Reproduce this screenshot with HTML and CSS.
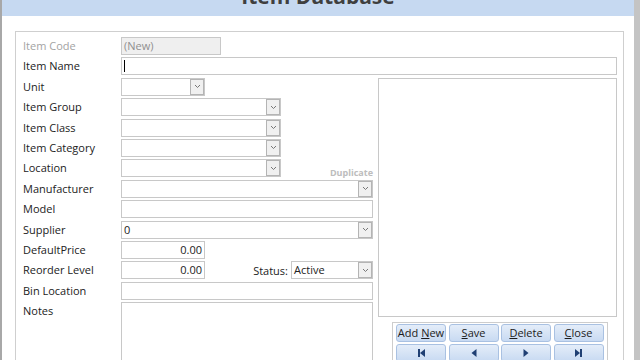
FILE: index.html
```html
<!DOCTYPE html>
<html lang="en">
<head>
  <meta charset="UTF-8">
  <title>Item Database</title>
  <meta name="viewport" content="width=device-width, initial-scale=1.0">
  <link rel="stylesheet" href="styles.css">
</head>
<body>

  <div class="window">
    <!-- TITLE -->
    <div class="titlebar">
      <h1>Item Database</h1>
    </div>

    <!-- FORM -->
    <div class="frame">
      <div class="form">
        <div class="label muted">Item Code</div>
        <div class="cell"><div class="box locked w-code">(New)</div></div>

        <div class="label">Item Name</div>
        <div class="cell wide"><div class="box w-full"><span class="caret"></span></div></div>

        <div class="label">Unit</div>
        <div class="cell"><div class="box combo w-short"><span class="val"></span><span class="arrow"><svg width="7" height="5" viewBox="0 0 7 5"><path d="M1 1l2.5 2.5L6 1" fill="none" stroke="#777" stroke-width="1"/></svg></span></div></div>

        <div class="label">Item Group</div>
        <div class="cell"><div class="box combo w-mid"><span class="val"></span><span class="arrow"><svg width="7" height="5" viewBox="0 0 7 5"><path d="M1 1l2.5 2.5L6 1" fill="none" stroke="#777" stroke-width="1"/></svg></span></div></div>

        <div class="label">Item Class</div>
        <div class="cell"><div class="box combo w-mid"><span class="val"></span><span class="arrow"><svg width="7" height="5" viewBox="0 0 7 5"><path d="M1 1l2.5 2.5L6 1" fill="none" stroke="#777" stroke-width="1"/></svg></span></div></div>

        <div class="label">Item Category</div>
        <div class="cell"><div class="box combo w-mid"><span class="val"></span><span class="arrow"><svg width="7" height="5" viewBox="0 0 7 5"><path d="M1 1l2.5 2.5L6 1" fill="none" stroke="#777" stroke-width="1"/></svg></span></div></div>

        <div class="label">Location</div>
        <div class="cell split">
          <div class="box combo w-mid"><span class="val"></span><span class="arrow"><svg width="7" height="5" viewBox="0 0 7 5"><path d="M1 1l2.5 2.5L6 1" fill="none" stroke="#777" stroke-width="1"/></svg></span></div>
          <span class="dup">Duplicate</span>
        </div>

        <div class="label">Manufacturer</div>
        <div class="cell"><div class="box combo w-long"><span class="val"></span><span class="arrow"><svg width="7" height="5" viewBox="0 0 7 5"><path d="M1 1l2.5 2.5L6 1" fill="none" stroke="#777" stroke-width="1"/></svg></span></div></div>

        <div class="label">Model</div>
        <div class="cell"><div class="box w-long"></div></div>

        <div class="label">Supplier</div>
        <div class="cell"><div class="box combo w-long"><span class="val">0</span><span class="arrow"><svg width="7" height="5" viewBox="0 0 7 5"><path d="M1 1l2.5 2.5L6 1" fill="none" stroke="#777" stroke-width="1"/></svg></span></div></div>

        <div class="label">DefaultPrice</div>
        <div class="cell"><div class="box num w-short">0.00</div></div>

        <div class="label">Reorder Level</div>
        <div class="cell split">
          <div class="box num w-short">0.00</div>
          <div class="status">
            <span>Status:</span>
            <div class="box combo w-status"><span class="val">Active</span><span class="arrow"><svg width="7" height="5" viewBox="0 0 7 5"><path d="M1 1l2.5 2.5L6 1" fill="none" stroke="#777" stroke-width="1"/></svg></span></div>
          </div>
        </div>

        <div class="label">Bin Location</div>
        <div class="cell"><div class="box w-long"></div></div>

        <div class="label">Notes</div>
        <div class="cell"><div class="box notes w-long"></div></div>

        <!-- picture + buttons -->
        <div class="side">
          <div class="picture"></div>
          <div class="panel">
            <button class="btn"><span>Add <u>N</u>ew</span></button>
            <button class="btn"><span><u>S</u>ave</span></button>
            <button class="btn"><span><u>D</u>elete</span></button>
            <button class="btn"><span><u>C</u>lose</span></button>
            <button class="btn"><svg width="9" height="8" viewBox="0 0 9 8"><rect x="1" y="0" width="2" height="8" fill="#1f3f73"/><path d="M8 0v8L3 4z" fill="#1f3f73"/></svg></button>
            <button class="btn"><svg width="6" height="8" viewBox="0 0 6 8"><path d="M5.5 0v8L0.5 4z" fill="#1f3f73"/></svg></button>
            <button class="btn"><svg width="6" height="8" viewBox="0 0 6 8"><path d="M0.5 0v8L5.5 4z" fill="#1f3f73"/></svg></button>
            <button class="btn"><svg width="9" height="8" viewBox="0 0 9 8"><path d="M1 0v8L6 4z" fill="#1f3f73"/><rect x="6" y="0" width="2" height="8" fill="#1f3f73"/></svg></button>
          </div>
        </div>
      </div>
    </div>
  </div>

</body>
</html>
```

FILE: styles.css
```css
body {
  margin: 0;
  font-family: "Open Sans", sans-serif;
  font-size: 11px;
  color: #222;
  background-color: #fff;
}

/* WINDOW */
.window {
  width: 640px;
  height: 360px;
  overflow: hidden;
  box-sizing: border-box;
  border-left: 2px solid #a8a8a8;
  border-right: 6px solid #c4c4c4;
}

.titlebar {
  height: 16px;
  background-color: #c6d9f1;
  overflow: hidden;
  text-align: center;
}

.titlebar h1 {
  margin: -16px 0 0;
  font-size: 21px;
  line-height: 24px;
  font-weight: bold;
  color: #3f3f3f;
}

/* FRAME */
.frame {
  margin: 15px 0 0 13px;
  width: 609px;
  height: 400px;
  box-sizing: border-box;
  border: 1px solid #cfcfcf;
  padding: 5px 0 0 7px;
}

.form {
  display: grid;
  grid-template-columns: 98px 257px 239px;
  grid-auto-rows: 18px;
  row-gap: 2.4px;
}

.label {
  grid-column: 1;
  line-height: 18px;
  white-space: nowrap;
}

.label.muted {
  color: #a3a3a3;
}

.cell {
  grid-column: 2;
  display: flex;
}

.cell.wide {
  grid-column: 2 / 4;
}

.cell.split {
  align-items: flex-end;
}

/* FIELDS */
.box {
  box-sizing: border-box;
  height: 18px;
  border: 1px solid #c8c8c8;
  background: #fff;
  line-height: 16px;
  padding: 0 2px;
  white-space: nowrap;
}

.box.locked {
  background: #efefef;
  color: #8f8f8f;
}

.box.num {
  text-align: right;
}

.box.notes {
  height: 80px;
}

.w-code { width: 100px; }
.w-full { width: 496px; }
.w-short { width: 84px; }
.w-mid { width: 160px; }
.w-long { width: 252px; }
.w-status { width: 82px; }

.caret {
  display: inline-block;
  width: 1px;
  height: 12px;
  margin-top: 2px;
  background: #000;
  vertical-align: top;
}

.combo {
  display: flex;
  padding-right: 0;
}

.combo .val {
  flex: 1;
}

.combo .arrow {
  width: 14px;
  height: 16px;
  box-sizing: border-box;
  border: 1px solid #b4b4b4;
  background: #f0f0f0;
  display: flex;
  align-items: center;
  justify-content: center;
}

.dup {
  margin-left: auto;
  margin-right: 5px;
  font-size: 9px;
  font-weight: bold;
  color: #bdbdbd;
  line-height: 12px;
  margin-bottom: -2px;
}

.status {
  margin-left: auto;
  margin-right: 5px;
  display: flex;
  align-items: center;
  gap: 3px;
}

/* PICTURE + BUTTONS */
.side {
  grid-column: 3;
  grid-row: 3 / span 12;
  display: flex;
  flex-direction: column;
  align-items: flex-start;
}

.picture {
  width: 239px;
  height: 239px;
  flex: none;
  box-sizing: border-box;
  border: 1px solid #c8c8c8;
}

.panel {
  margin: 5px 0 0 14px;
  width: 216px;
  box-sizing: border-box;
  border: 1px solid #cdcdcd;
  padding: 1px 3px 20px;
  display: grid;
  grid-template-columns: repeat(4, 50px);
  grid-auto-rows: 18px;
  column-gap: 2.5px;
  row-gap: 2px;
}

.btn {
  margin: 0;
  padding: 0;
  font-family: "Open Sans", sans-serif;
  font-size: 11px;
  color: #1c1c1c;
  border: 1px solid #a9c1e2;
  border-radius: 3px;
  background: linear-gradient(#e4edf9, #c8daf2);
  display: flex;
  align-items: center;
  justify-content: center;
  white-space: nowrap;
}
```
